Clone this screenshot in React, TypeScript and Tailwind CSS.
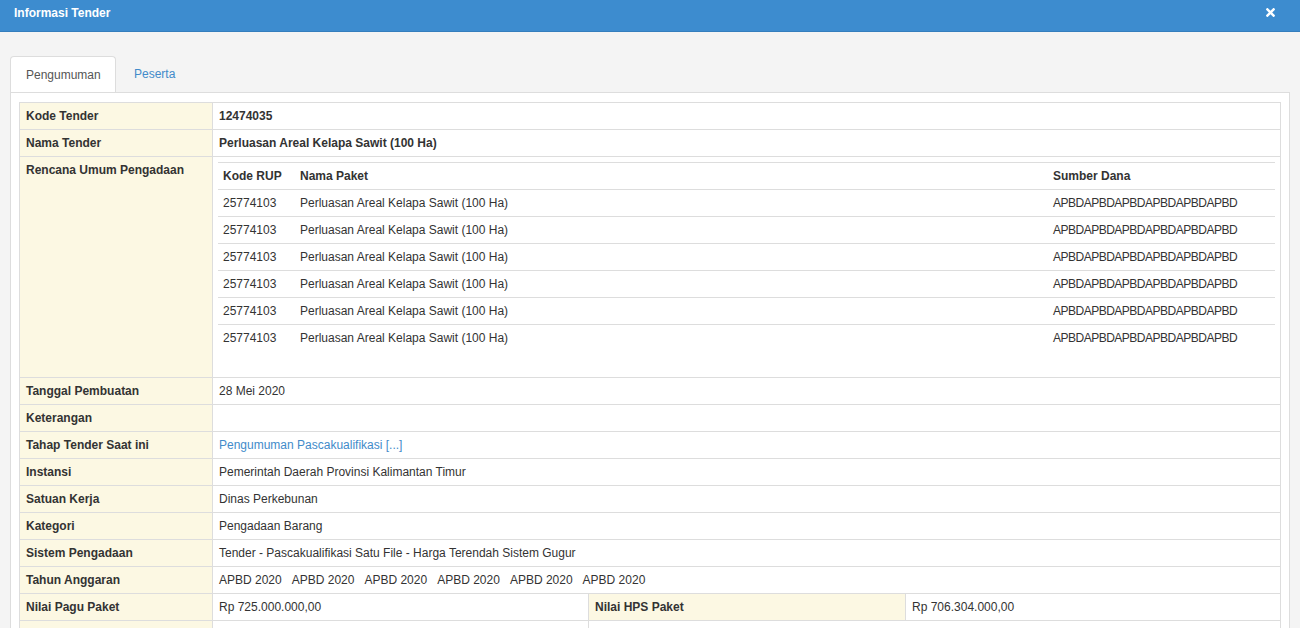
import { FaTimes } from "react-icons/fa";

const font = { fontFamily: '"Liberation Sans", Arial, sans-serif' };

const rupRows = Array.from({ length: 6 }, () => ({
  kode: "25774103",
  nama: "Perluasan Areal Kelapa Sawit (100 Ha)",
  sumber: "APBDAPBDAPBDAPBDAPBDAPBD",
}));

function Label({ children, className = "" }: { children?: React.ReactNode; className?: string }) {
  return (
    <div className={`bg-[#fcf8e3] px-[6px] py-[5px] font-bold leading-4 ${className}`}>
      {children}
    </div>
  );
}

function Row({ label, children, bold }: { label: string; children?: React.ReactNode; bold?: boolean }) {
  return (
    <div className="flex border-t border-[#ddd]">
      <Label className="w-[193px] shrink-0 border-r border-[#ddd]">{label}</Label>
      <div className={`flex-1 px-[6px] py-[5px] leading-4 ${bold ? "font-bold" : ""}`}>{children}</div>
    </div>
  );
}

export default function App() {
  return (
    <div className="min-h-screen bg-[#f4f4f4] text-[12px] text-[#333]" style={font}>
      {/* Modal header */}
      <div className="flex h-8 items-center justify-between border-b border-[#357ebd] bg-[#3d8ccf] pb-[6px] pl-[14px] pr-[23px]">
        <span className="font-bold text-white">Informasi Tender</span>
        <FaTimes className="text-white" size={13} />
      </div>

      <div className="px-[10px] pt-6">
        {/* Tabs */}
        <div className="flex items-end">
          <div className="flex h-9 w-[106px] items-center rounded-t border border-b-0 border-[#ddd] bg-white pl-[15px] text-[#555]">
            Pengumuman
          </div>
          <div className="flex h-9 items-center pl-[18px] text-[#428bca]">Peserta</div>
        </div>

        {/* Tab panel */}
        <div className="border border-[#ddd] bg-white px-[8px] pt-[9px] pb-[8px]">
          <div className="border-x border-b border-[#ddd]">
            <Row label="Kode Tender" bold>12474035</Row>
            <Row label="Nama Tender" bold>Perluasan Areal Kelapa Sawit (100 Ha)</Row>

            <div className="flex border-t border-[#ddd]">
              <Label className="w-[193px] shrink-0 border-r border-[#ddd]">Rencana Umum Pengadaan</Label>
              <div className="flex-1 p-[5px]">
                <div className="mb-[21px]">
                  <div className="flex border-t border-[#ddd] font-bold">
                    <div className="w-[77px] px-[5px] py-[5px] leading-4">Kode RUP</div>
                    <div className="flex-1 px-[5px] py-[5px] leading-4">Nama Paket</div>
                    <div className="w-[227px] px-[5px] py-[5px] leading-4">Sumber Dana</div>
                  </div>
                  {rupRows.map((r, i) => (
                    <div key={i} className="flex border-t border-[#ddd]">
                      <div className="w-[77px] px-[5px] py-[5px] leading-4">{r.kode}</div>
                      <div className="flex-1 px-[5px] py-[5px] leading-4">{r.nama}</div>
                      <div className="w-[227px] px-[5px] py-[5px] leading-4 tracking-[-0.5px]">{r.sumber}</div>
                    </div>
                  ))}
                </div>
              </div>
            </div>

            <Row label="Tanggal Pembuatan">28 Mei 2020</Row>
            <Row label="Keterangan" />
            <Row label="Tahap Tender Saat ini">
              <span className="text-[#428bca]">Pengumuman Pascakualifikasi [...]</span>
            </Row>
            <Row label="Instansi">Pemerintah Daerah Provinsi Kalimantan Timur</Row>
            <Row label="Satuan Kerja">Dinas Perkebunan</Row>
            <Row label="Kategori">Pengadaan Barang</Row>
            <Row label="Sistem Pengadaan">Tender - Pascakualifikasi Satu File - Harga Terendah Sistem Gugur</Row>
            <Row label="Tahun Anggaran">
              <div className="flex gap-[10px]">
                {Array.from({ length: 6 }, (_, i) => (
                  <span key={i}>APBD 2020</span>
                ))}
              </div>
            </Row>

            <div className="flex border-t border-[#ddd]">
              <Label className="w-[193px] shrink-0 border-r border-[#ddd]">Nilai Pagu Paket</Label>
              <div className="w-[376px] shrink-0 border-r border-[#ddd] px-[6px] py-[5px] leading-4">
                Rp 725.000.000,00
              </div>
              <Label className="w-[317px] shrink-0 border-r border-[#ddd]">Nilai HPS Paket</Label>
              <div className="flex-1 px-[6px] py-[5px] leading-4">Rp 706.304.000,00</div>
            </div>

            <div className="flex border-t border-[#ddd]">
              <Label className="w-[193px] shrink-0 border-r border-[#ddd]">&nbsp;</Label>
              <div className="w-[376px] shrink-0 border-r border-[#ddd] px-[6px] py-[5px] leading-4">&nbsp;</div>
              <div className="flex-1 px-[6px] py-[5px] leading-4">&nbsp;</div>
            </div>
          </div>
        </div>
      </div>
    </div>
  );
}
